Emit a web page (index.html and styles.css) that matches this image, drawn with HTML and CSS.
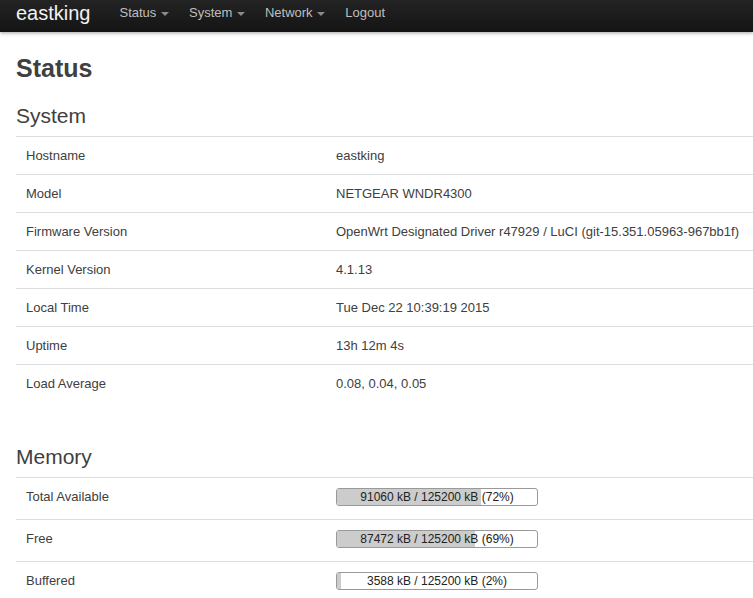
FILE: index.html
```html
<!DOCTYPE html>
<html lang="en">

<head>
  <meta charset="UTF-8">
  <title>eastking - Overview - LuCI</title>
  <link rel="stylesheet" href="styles.css">
</head>

<body>
  <!-- Top bar -->
  <header class="navbar">
    <a class="brand" href="#">eastking</a>
    <ul class="nav">
      <li><a href="#" class="dropdown">Status <span class="caret"></span></a></li>
      <li><a href="#" class="dropdown">System <span class="caret"></span></a></li>
      <li><a href="#" class="dropdown">Network <span class="caret"></span></a></li>
      <li><a href="#">Logout</a></li>
    </ul>
  </header>

  <div class="container">
    <h2 class="page-title">Status</h2>

    <!-- System -->
    <section class="cbi-section">
      <h3 class="section-title">System</h3>
      <table class="cbi-table">
        <tr><td class="key">Hostname</td><td>eastking</td></tr>
        <tr><td class="key">Model</td><td>NETGEAR WNDR4300</td></tr>
        <tr><td class="key">Firmware Version</td><td>OpenWrt Designated Driver r47929 / LuCI (git-15.351.05963-967bb1f)</td></tr>
        <tr><td class="key">Kernel Version</td><td>4.1.13</td></tr>
        <tr><td class="key">Local Time</td><td>Tue Dec 22 10:39:19 2015</td></tr>
        <tr><td class="key">Uptime</td><td>13h 12m 4s</td></tr>
        <tr><td class="key">Load Average</td><td>0.08, 0.04, 0.05</td></tr>
      </table>
    </section>

    <!-- Memory -->
    <section class="cbi-section">
      <h3 class="section-title">Memory</h3>
      <table class="cbi-table memory">
        <tr>
          <td class="key">Total Available</td>
          <td>
            <div class="progress">
              <div class="progress-fill" style="width: 72%"></div>
              <span class="progress-text">91060 kB / 125200 kB (72%)</span>
            </div>
          </td>
        </tr>
        <tr>
          <td class="key">Free</td>
          <td>
            <div class="progress">
              <div class="progress-fill" style="width: 69%"></div>
              <span class="progress-text">87472 kB / 125200 kB (69%)</span>
            </div>
          </td>
        </tr>
        <tr>
          <td class="key">Buffered</td>
          <td>
            <div class="progress">
              <div class="progress-fill" style="width: 2%"></div>
              <span class="progress-text">3588 kB / 125200 kB (2%)</span>
            </div>
          </td>
        </tr>
      </table>
    </section>
  </div>
</body>

</html>
```

FILE: styles.css
```css
body {
  margin: 0;
  padding: 0;
  background-color: #fff;
  font-family: "Liberation Sans", Arial, sans-serif;
  font-size: 13px;
  line-height: 18px;
  color: #404040;
}

/* Top bar */
.navbar {
  display: flex;
  align-items: center;
  height: 32px;
  box-sizing: border-box;
  padding: 0 16px 6px;
  background-color: #1c1c1c;
  background-image: linear-gradient(to bottom, #242424, #141414);
  box-shadow: 0 1px 3px rgba(0, 0, 0, 0.25), 0 2px 4px rgba(0, 0, 0, 0.1);
}

.brand {
  font-size: 20px;
  line-height: 26px;
  color: #f2f2f2;
  text-decoration: none;
  margin-right: 19px;
}

.nav {
  display: flex;
  margin: 0;
  padding: 0;
  list-style: none;
}

.nav a {
  display: block;
  padding: 0 10px;
  line-height: 26px;
  color: #bfbfbf;
  text-decoration: none;
}

.caret {
  display: inline-block;
  width: 0;
  height: 0;
  margin-left: 1px;
  vertical-align: middle;
  border-top: 4px solid #8a8a8a;
  border-left: 4px solid transparent;
  border-right: 4px solid transparent;
}

/* Content */
.container {
  padding-left: 16px;
}

.page-title {
  margin: 18px 0 15px;
  font-size: 25px;
  line-height: 36px;
  font-weight: bold;
  color: #404040;
}

.section-title {
  margin: 0 0 5px;
  font-size: 21px;
  line-height: 30px;
  font-weight: normal;
  color: #404040;
}

.cbi-section {
  margin-bottom: 40px;
}

.cbi-table {
  width: 100%;
  border-collapse: collapse;
}

.cbi-table td {
  padding: 10px 10px 9px;
  border-top: 1px solid #ddd;
  vertical-align: top;
  text-align: left;
}

.cbi-table td.key {
  width: 290px;
}

/* Progress bars */
.progress {
  position: relative;
  width: 200px;
  height: 16px;
  margin-bottom: 4px;
  border: 1px solid #999;
  border-radius: 3px;
  background-color: #fff;
  overflow: hidden;
}

.progress-fill {
  height: 100%;
  background-color: #ccc;
}

.progress-text {
  position: absolute;
  top: 1px;
  left: 0;
  right: 0;
  text-align: center;
  font-size: 12px;
  line-height: 15px;
  color: #222;
}
```
